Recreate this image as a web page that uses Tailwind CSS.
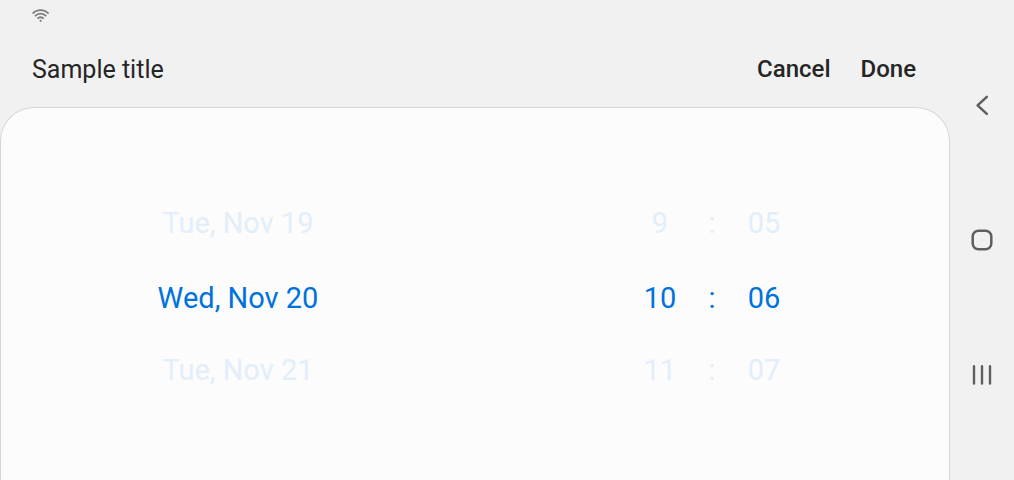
<!DOCTYPE html>
<html lang="en">
<head>
<meta charset="utf-8">
<meta name="viewport" content="width=device-width, initial-scale=1">
<title>Sample title</title>
<script src="https://cdn.jsdelivr.net/npm/@tailwindcss/browser@4"></script>
</head>
<body class="flex min-h-screen bg-[#f1f1f1] font-[Roboto,sans-serif] text-[#252525]">
  <div class="flex min-w-0 flex-1 flex-col">
    <div class="flex h-8 items-center px-8">
      <svg class="h-4 w-[18px]" viewBox="0 0 18 16" fill="none" stroke="#7c7c7c" stroke-width="1.8" aria-label="Wi-Fi" role="img">
        <path d="M.6 5.6C5 .9 12.2.9 16.6 5.6"/>
        <path d="M3 8.1C6.1 4.8 11.1 4.8 14.2 8.1"/>
        <path d="M5.5 10.6C7.2 8.8 10 8.8 11.7 10.6"/>
        <circle cx="8.6" cy="12.8" r="1.1" fill="#7c7c7c" stroke="none"/>
      </svg>
    </div>
    <header class="flex h-[75px] items-center justify-between pr-[34px] pl-8">
      <h1 class="text-[25px] leading-8">Sample title</h1>
      <div class="flex gap-[30px] pb-0.5 text-2xl font-medium">
        <button type="button">Cancel</button>
        <button type="button">Done</button>
      </div>
    </header>
    <main class="grid flex-1 grid-cols-2 rounded-t-[34px] border border-b-0 border-[#d6d6d6] bg-[#fcfcfc] pt-[77px] text-[29px] leading-9 text-[#e2eefa]">
      <div class="flex flex-col items-center" role="group" aria-label="Date">
        <button type="button" class="h-[75px]">Tue, Nov 19</button>
        <button type="button" class="h-[75px] text-[#0072de]">Wed, Nov 20</button>
        <button type="button" class="h-[70px]">Tue, Nov 21</button>
      </div>
      <div class="flex justify-center">
        <div class="flex w-[52px] flex-col" role="group" aria-label="Hour">
          <button type="button" class="h-[75px]">9</button>
          <button type="button" class="h-[75px] text-[#0072de]">10</button>
          <button type="button" class="h-[70px]">11</button>
        </div>
        <div class="flex w-[52px] flex-col" aria-hidden="true">
          <span class="flex h-[75px] items-center justify-center">:</span>
          <span class="flex h-[75px] items-center justify-center text-[#0072de]">:</span>
          <span class="flex h-[70px] items-center justify-center">:</span>
        </div>
        <div class="flex w-[52px] flex-col" role="group" aria-label="Minute">
          <button type="button" class="h-[75px]">05</button>
          <button type="button" class="h-[75px] text-[#0072de]">06</button>
          <button type="button" class="h-[70px]">07</button>
        </div>
      </div>
    </main>
  </div>
  <nav class="flex w-16 shrink-0 flex-col items-center justify-center gap-[111px]" aria-label="System navigation">
    <button type="button" aria-label="Back">
      <svg class="size-6" viewBox="0 0 24 24" fill="none" stroke="#5e5e5e" stroke-width="2.5" stroke-linecap="round" stroke-linejoin="round"><path d="M16.8 3.8 7.6 12.3l9.2 8.6"/></svg>
    </button>
    <button type="button" aria-label="Home">
      <svg class="size-6" viewBox="0 0 24 24" fill="none" stroke="#5e5e5e" stroke-width="2.5"><rect x="2.7" y="2.7" width="18.6" height="18.6" rx="5.8"/></svg>
    </button>
    <button type="button" aria-label="Recents">
      <svg class="size-6" viewBox="0 0 24 24" fill="none" stroke="#5e5e5e" stroke-width="2.4" stroke-linecap="round"><path d="M4 3.3v17.2M12 3.3v17.2M20 3.3v17.2"/></svg>
    </button>
  </nav>
</body>
</html>
